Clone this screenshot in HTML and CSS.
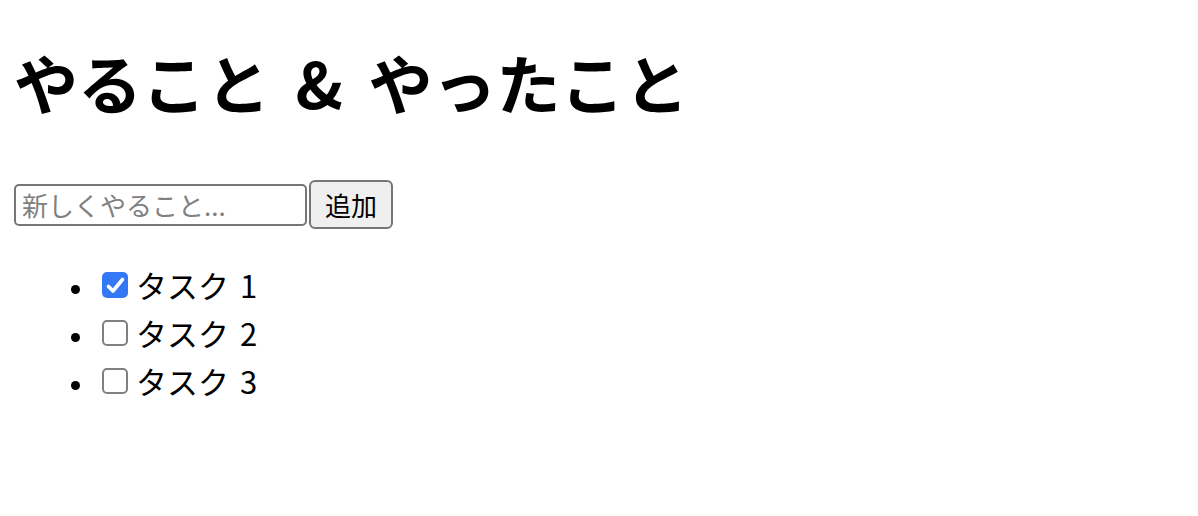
FILE: index.html
```html
<!DOCTYPE html>
<html lang="ja">
<head>
<meta charset="utf-8">
<title>やること &amp; やったこと</title>
<link rel="stylesheet" href="styles.css">
</head>
<body>
<h1 class="title">やること &amp; やったこと</h1>
<form class="add-form">
  <input class="new-task" type="text" placeholder="新しくやること...">
  <button class="add-btn" type="button">追加</button>
</form>
<ul class="tasks">
  <li class="task">
    <label class="task-label">
      <span class="box checked"><svg viewBox="0 0 26 26" width="26" height="26"><path d="M6.5 14.5 L11 19 L20.5 7.5" fill="none" stroke="#fff" stroke-width="3.6" stroke-linecap="round" stroke-linejoin="round"/></svg></span>
      <span class="task-text">タスク 1</span>
    </label>
  </li>
  <li class="task">
    <label class="task-label">
      <span class="box"></span>
      <span class="task-text">タスク 2</span>
    </label>
  </li>
  <li class="task">
    <label class="task-label">
      <span class="box"></span>
      <span class="task-text">タスク 3</span>
    </label>
  </li>
</ul>
</body>
</html>
```
FILE: styles.css
```css
html, body {
  background: #fff;
}
body {
  margin: 35px 14px;
  font-family: "Noto Sans CJK JP", "Noto Sans", sans-serif;
  color: #000;
}
.title {
  margin: 0 0 53px 0;
  font-size: 64px;
  font-weight: 700;
  line-height: 92px;
  word-spacing: 11px;
}
.add-form {
  display: flex;
  align-items: center;
  gap: 2px;
  height: 49px;
  margin: 0;
}
.new-task {
  box-sizing: border-box;
  width: 293px;
  height: 42px;
  margin: 0;
  padding: 0 6px;
  border: 2px solid #767676;
  border-radius: 5px;
  font-family: "Noto Sans CJK JP", sans-serif;
  font-size: 26px;
  color: #000;
  background: #fff;
  outline: none;
}
.new-task::placeholder {
  color: #808080;
}
.add-btn {
  box-sizing: border-box;
  width: 84px;
  height: 49px;
  margin: 0;
  padding: 0;
  border: 2px solid #767676;
  border-radius: 6px;
  background: #efefef;
  font-family: "Noto Sans CJK JP", sans-serif;
  font-size: 26px;
  color: #000;
}
.tasks {
  margin: 32px 0 0;
  padding-left: 82px;
  font-size: 31px;
  line-height: 48px;
}
.task {
  list-style: disc;
}
.task::marker {
  font-size: 24px;
}
.task-label {
  display: inline-flex;
  align-items: center;
  gap: 8px;
}
.box {
  box-sizing: border-box;
  width: 26px;
  height: 26px;
  margin-left: 6px;
  border: 2px solid #808080;
  border-radius: 5px;
  background: #fff;
  display: inline-flex;
}
.box.checked {
  border: none;
  background: #3478f6;
}
.box svg {
  display: block;
}
.task-text {
  word-spacing: 4px;
}
```
